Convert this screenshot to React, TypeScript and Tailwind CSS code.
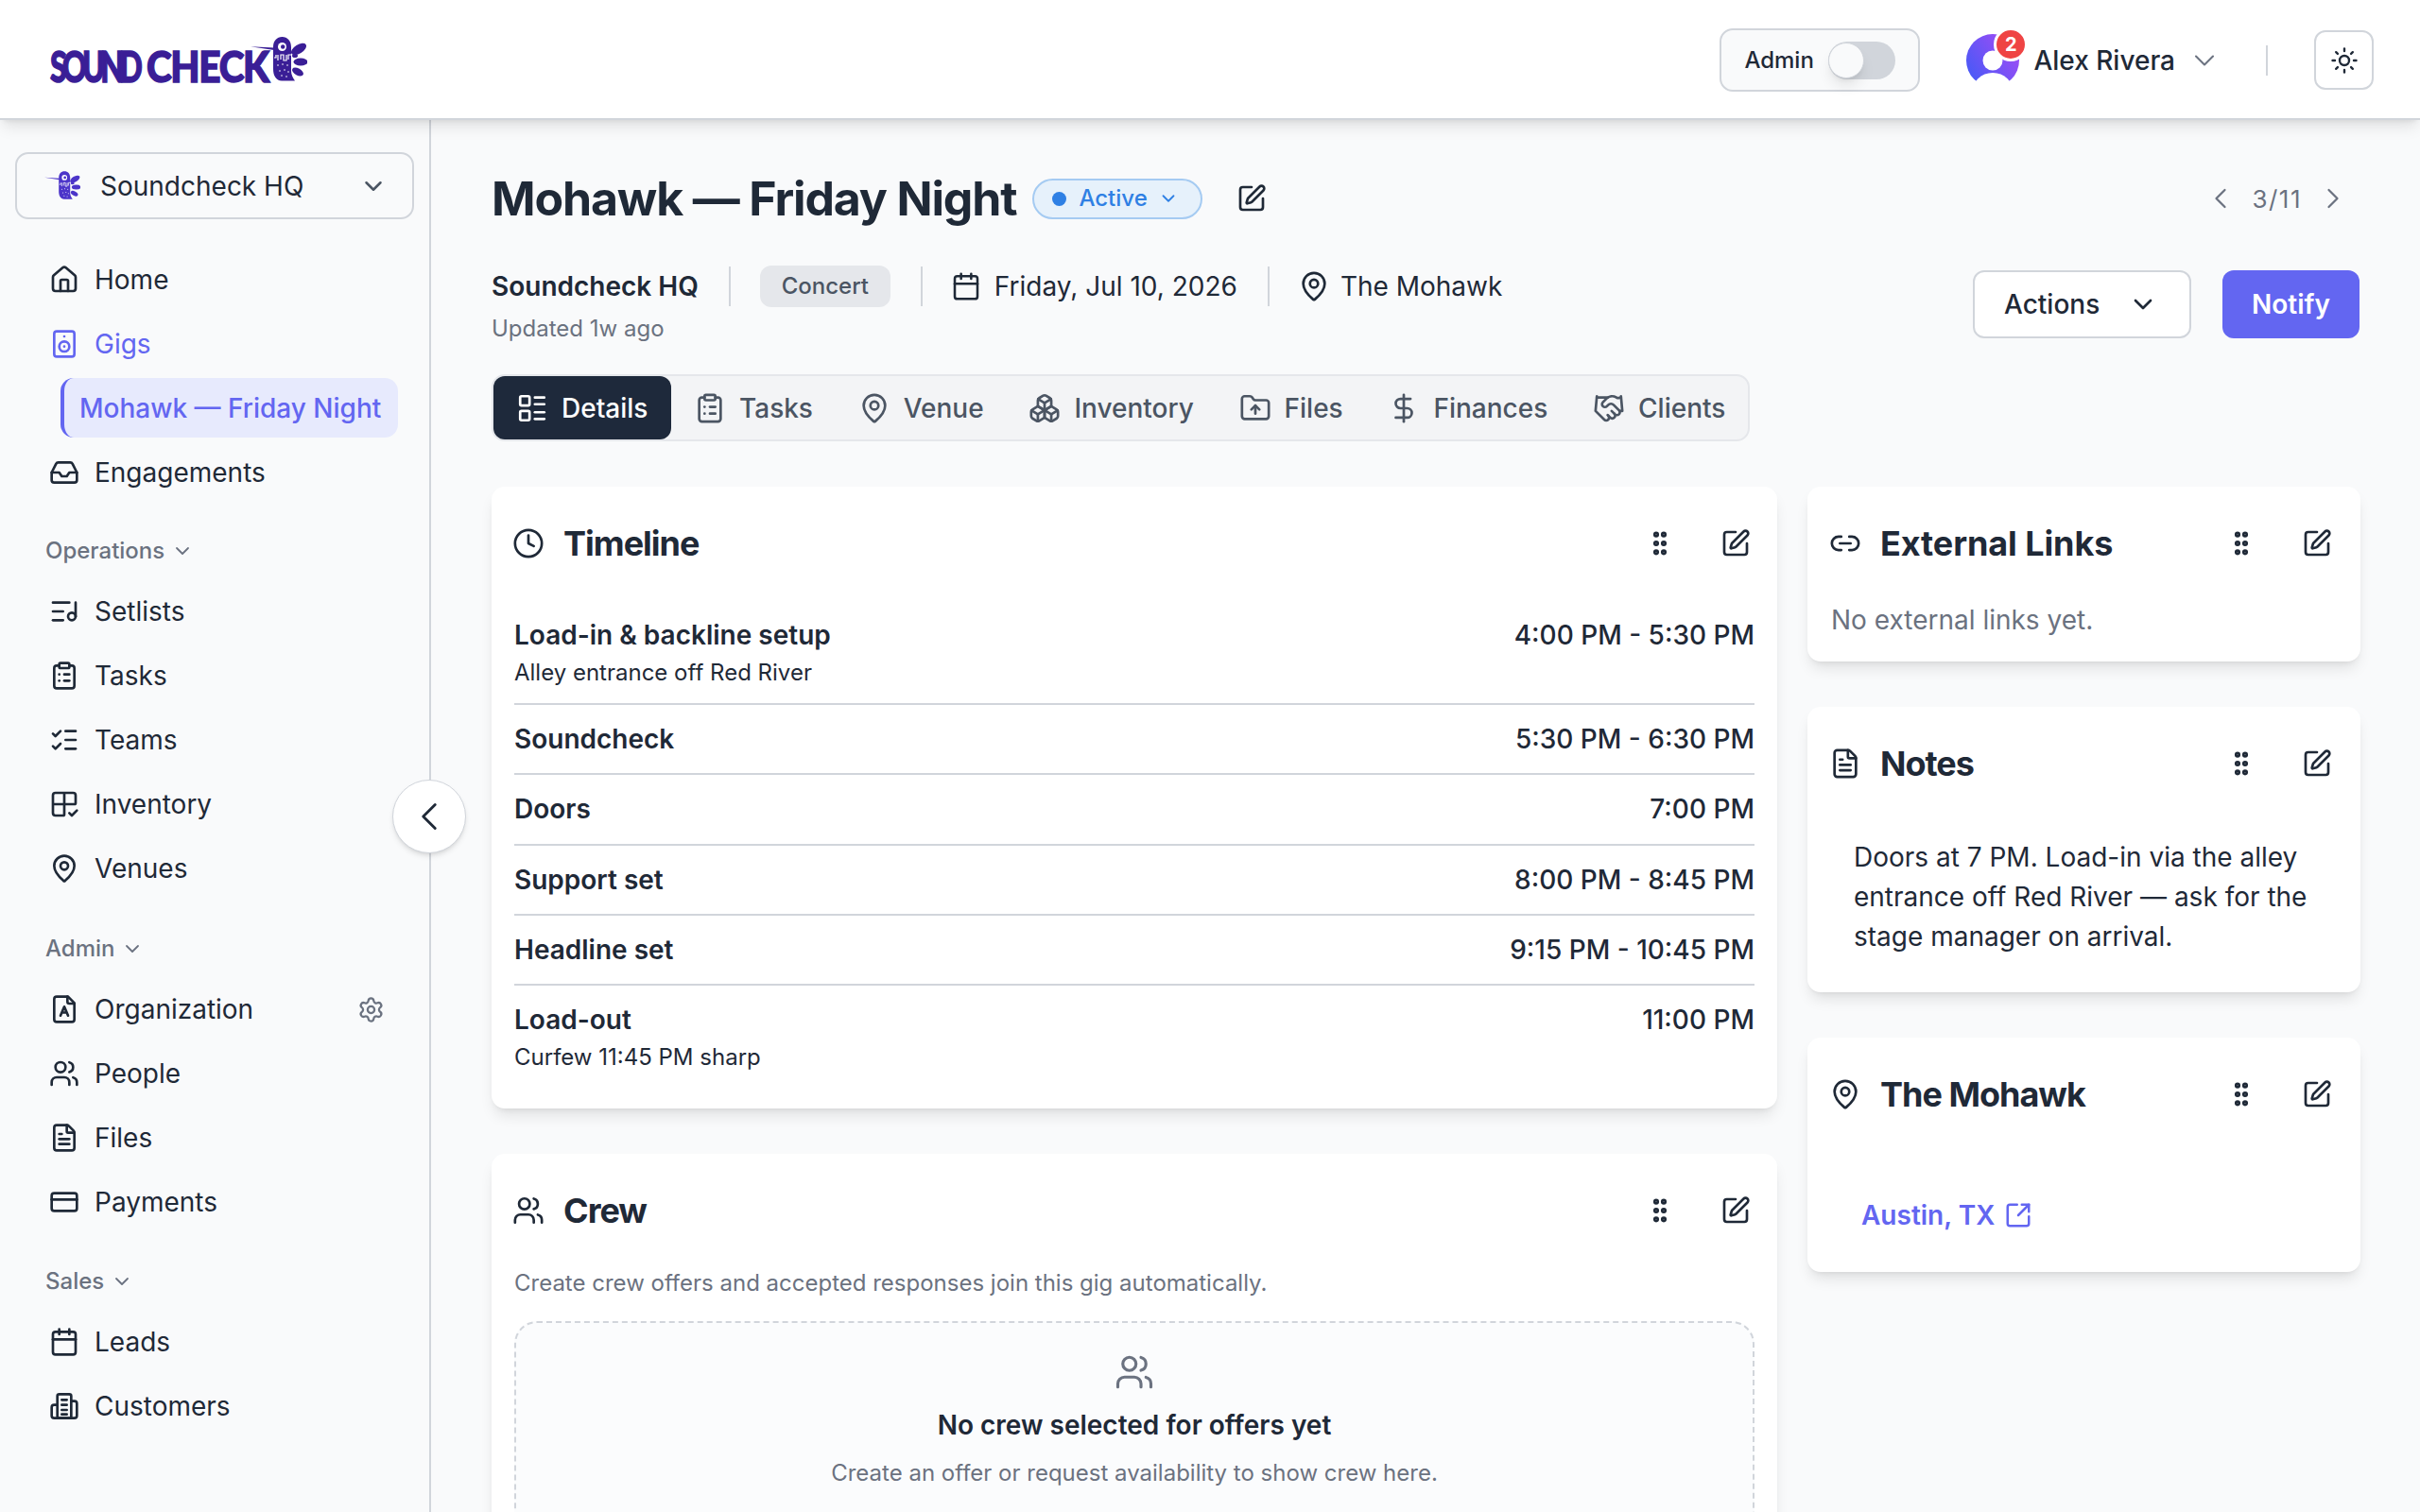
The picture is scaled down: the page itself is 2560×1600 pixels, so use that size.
import React from "react";
import {
  House, Speaker, Inbox, ListMusic, ClipboardList, ListChecks, Grid2x2Check, MapPin, Users, FileText, CreditCard,
  Calendar, Settings, ChevronDown, ChevronLeft, ChevronRight, SquarePen, GripVertical, Clock, Link2, SquareArrowOutUpRight,
  Sun, LayoutList, Boxes, FolderUp, DollarSign, Handshake,
} from "lucide-react";

type IconProps = { className?: string; strokeWidth?: number };

function Bird({ color, className }: { color: string; className?: string }) {
  return (
    <svg viewBox="0 0 60 48" className={className}>
      <path d="M0 10.2 L25 11.6 L25 14 Z" fill={color} />
      <path d="M24 11 C24 4 28 0 33.5 0 C39 0 43 4 43 11 L43 36 C43 40 45 44 47 46.4 L33 46.4 C27 46.4 24 41 24 34 Z" fill={color} />
      <circle cx="33.5" cy="10.5" r="4.5" fill="#fff" />
      <circle cx="34.2" cy="10.5" r="2.2" fill={color} />
      <path d="M25 22 h2 v-3 M29 25 v-6 M32 24 v-5 h3 v6 h3 v-6 M40 24 v-5 h4" fill="none" stroke="#fff" strokeWidth="1.2" />
      <g fill="#fff">
        <circle cx="29" cy="30" r=".8" /><circle cx="34" cy="29" r=".8" /><circle cx="39" cy="30" r=".8" />
        <circle cx="31" cy="36" r=".8" /><circle cx="36" cy="35" r=".8" /><circle cx="40" cy="37" r=".8" />
        <circle cx="33" cy="41" r=".8" /><circle cx="38" cy="42" r=".8" />
      </g>
      <ellipse cx="51" cy="13" rx="9" ry="4.6" transform="rotate(-32 51 13)" fill={color} />
      <ellipse cx="53" cy="26.5" rx="7.5" ry="4" fill={color} />
      <ellipse cx="50" cy="37" rx="6.5" ry="3.6" transform="rotate(28 50 37)" fill={color} />
      <ellipse cx="47" cy="20" rx="3" ry="2" fill={color} />
    </svg>
  );
}

function Logo() {
  return (
    <div className="flex items-end ml-[53px] h-[50px] mt-[2px]">
      <span className="[font-family:Lato,sans-serif] font-black text-[46px] leading-[38px] tracking-[-7px] scale-x-[.7] origin-left text-[#3a1e96] [-webkit-text-stroke:1.5px_#3a1e96] w-[102px] whitespace-nowrap">SOUND</span>
      <span className="[font-family:Lato,sans-serif] font-black text-[46px] leading-[38px] tracking-[-1.5px] scale-x-[.88] origin-left text-[#3a1e96] [-webkit-text-stroke:1.5px_#3a1e96] w-[110px] whitespace-nowrap">CHECK</span>
      <Bird color="#3a1e96" className="w-[60px] h-[48px] mb-[2px]" />
    </div>
  );
}

function OrgIcon({ className, strokeWidth = 2 }: IconProps) {
  return (
    <svg viewBox="0 0 24 24" fill="none" stroke="currentColor" strokeWidth={strokeWidth} strokeLinecap="round" strokeLinejoin="round" className={className}>
      <path d="M15 2H6a2 2 0 0 0-2 2v16a2 2 0 0 0 2 2h12a2 2 0 0 0 2-2V7Z" />
      <path d="M14.5 2v4a1.5 1.5 0 0 0 1.5 1.5h4" />
      <path d="M9 17l3-7 3 7M10 14.6h4" />
    </svg>
  );
}

function CustomersIcon({ className, strokeWidth = 2 }: IconProps) {
  return (
    <svg viewBox="0 0 24 24" fill="none" stroke="currentColor" strokeWidth={strokeWidth} strokeLinecap="round" strokeLinejoin="round" className={className}>
      <rect x="6.5" y="2.5" width="11" height="19" rx="1.5" />
      <path d="M6.5 11H4a2 2 0 0 0-2 2v6.5a2 2 0 0 0 2 2h16a2 2 0 0 0 2-2V10a2 2 0 0 0-2-2h-2.5" />
      <path d="M10 7h4M10 11h4M10 15h4M10 18.5h4" />
    </svg>
  );
}

function NavItem({ icon: Icon, label, right }: { icon: React.ComponentType<IconProps>; label: string; right?: React.ReactNode }) {
  return (
    <div className="flex items-center h-[68px] pl-[52px] pr-[47px] text-[28px] text-[#1f2937]">
      <Icon className="w-[32px] h-[32px] mr-[16px] shrink-0" strokeWidth={2} />
      <span className="flex-1">{label}</span>
      {right}
    </div>
  );
}

function SectionLabel({ label, className }: { label: string; className?: string }) {
  return (
    <div className={`flex items-center gap-[7px] h-[40px] pl-[48px] text-[24px] font-medium text-[#6b7280] ${className ?? ""}`}>
      {label}
      <ChevronDown className="w-[24px] h-[24px]" strokeWidth={1.8} />
    </div>
  );
}

function Sidebar() {
  return (
    <aside className="relative w-[456px] shrink-0 border-r-2 border-[#d1d5db] bg-[#f9fafb]">
      <div className="mx-[16px] mt-[34px] h-[71px] flex items-center rounded-[14px] border-2 border-[#d1d5db] pl-[29px] pr-[15px]">
        <Bird color="#4c35c9" className="w-[38px] h-[31px] mr-[21px]" />
        <span className="flex-1 text-[28px] text-[#1f2937]">Soundcheck HQ</span>
        <ChevronDown className="w-[30px] h-[30px] mr-[11px] text-[#4b5563]" strokeWidth={2} />
      </div>
      <div className="mt-[30px]">
        <NavItem icon={House} label="Home" />
        <div className="flex items-center h-[68px] pl-[52px] text-[28px] text-[#6366f1]">
          <Speaker className="w-[32px] h-[32px] mr-[16px]" strokeWidth={2} />
          Gigs
        </div>
        <div className="mt-[2px] ml-[64px] mr-[33px] h-[63px] flex items-center rounded-[14px] border-l-4 border-[#6366f1] bg-[#e7eafd] pl-[16px] text-[28px] font-medium text-[#6366f1]">
          Mohawk — Friday Night
        </div>
        <div className="mt-[3px]"><NavItem icon={Inbox} label="Engagements" /></div>
      </div>
      <SectionLabel label="Operations" className="mt-[29px]" />
      <div className="mt-[10px]">
        <NavItem icon={ListMusic} label="Setlists" />
        <NavItem icon={ClipboardList} label="Tasks" />
        <NavItem icon={ListChecks} label="Teams" />
        <NavItem icon={Grid2x2Check} label="Inventory" />
        <NavItem icon={MapPin} label="Venues" />
      </div>
      <SectionLabel label="Admin" className="mt-[31px]" />
      <div className="mt-[10px]">
        <NavItem icon={OrgIcon} label="Organization" right={<Settings className="w-[29px] h-[29px] text-[#6b7280]" strokeWidth={1.9} />} />
        <NavItem icon={Users} label="People" />
        <NavItem icon={FileText} label="Files" />
        <NavItem icon={CreditCard} label="Payments" />
      </div>
      <SectionLabel label="Sales" className="mt-[30px]" />
      <div className="mt-[10px]">
        <NavItem icon={Calendar} label="Leads" />
        <NavItem icon={CustomersIcon} label="Customers" />
      </div>
      <button className="absolute left-[415px] top-[698px] w-[78px] h-[78px] rounded-full bg-white border border-[#d1d5db] shadow-md flex items-center justify-center">
        <ChevronLeft className="w-[50px] h-[50px] text-[#1f2937]" strokeWidth={1.4} />
      </button>
    </aside>
  );
}

function Header() {
  return (
    <header className="relative z-10 h-[127px] shrink-0 bg-white border-b-2 border-[#d1d5db] shadow-lg flex items-center justify-between">
      <Logo />
      <div className="flex items-center mr-[49px] pt-[2px]">
        <div className="w-[212px] h-[67px] rounded-[14px] border-2 border-[#d1d5db] bg-[#f9fafb] flex items-center pl-[24px] text-[24px] font-medium text-[#1f2937]">
          Admin
          <span className="ml-[15px] w-[71px] h-[40px] rounded-full bg-[#d1d5db] flex items-center">
            <span className="w-[38px] h-[38px] rounded-full bg-[#f9fafb] border border-[#d1d5db] shadow-lg" />
          </span>
        </div>
        <div className="relative ml-[49px] w-[56px] h-[56px]">
          <svg viewBox="0 0 56 56" className="w-[56px] h-[56px]">
            <defs>
              <linearGradient id="avatarGrad" x1="0" y1="1" x2="1" y2="0.3">
                <stop offset="0" stopColor="#3b5bf7" />
                <stop offset="1" stopColor="#a14cf5" />
              </linearGradient>
            </defs>
            <circle cx="28" cy="28" r="28" fill="url(#avatarGrad)" />
            <circle cx="28" cy="28" r="10.5" fill="#fff" />
            <ellipse cx="28" cy="62" rx="22" ry="21" fill="#fff" />
          </svg>
          <span className="absolute left-[29px] top-[-7px] w-[36px] h-[36px] rounded-full bg-[#ef4444] border-[3px] border-white flex items-center justify-center text-[20px] font-bold text-white">2</span>
        </div>
        <span className="ml-[15px] text-[28px] font-medium text-[#1f2937]">Alex Rivera</span>
        <ChevronDown className="ml-[13px] w-[36px] h-[36px] text-[#6b7280]" strokeWidth={1.4} />
        <span className="ml-[47px] w-[2px] h-[32px] bg-[#d1d5db]" />
        <div className="ml-[49px] w-[63px] h-[63px] rounded-[12px] border-2 border-[#d1d5db] flex items-center justify-center">
          <Sun className="w-[30px] h-[30px] text-[#1f2937]" strokeWidth={1.9} />
        </div>
      </div>
    </header>
  );
}

function Divider() {
  return <span className="w-[2px] h-[42px] bg-[#d1d5db] mx-[32px]" />;
}

function TitleBlock() {
  return (
    <div className="pt-[53px]">
      <div className="flex items-center h-[60px]">
        <h1 className="text-[50px] font-bold tracking-[-1.15px] text-[#1f2937]">Mohawk — Friday Night</h1>
        <div className="ml-[17px] w-[180px] h-[43px] rounded-full border-2 border-[#a5cbf2] bg-[#e6f1fb] flex items-center pl-[19px] text-[24px] font-medium text-[#2f80e4]">
          <span className="w-[15px] h-[15px] rounded-full bg-[#2f80e4] mr-[13px]" />
          Active
          <ChevronDown className="ml-[11px] w-[22px] h-[22px]" strokeWidth={2} />
        </div>
        <SquarePen className="ml-[36px] w-[32px] h-[32px] text-[#1f2937]" strokeWidth={2} />
        <div className="ml-auto flex items-center text-[26px] tracking-[1.5px] text-[#6b7280] mr-[11px]">
          <ChevronLeft className="w-[36px] h-[36px]" strokeWidth={1.5} />
          <span className="mx-[15px]">3/11</span>
          <ChevronRight className="w-[36px] h-[36px]" strokeWidth={1.5} />
        </div>
      </div>
      <div className="flex items-start justify-between mt-[41px]">
        <div>
          <div className="flex items-center h-[44px] text-[28px] text-[#1f2937]">
            <span className="font-semibold">Soundcheck HQ</span>
            <Divider />
            <span className="w-[138px] -ml-[1px] h-[44px] rounded-[12px] bg-[#e5e7eb] text-[24px] font-medium text-[#4b5563] flex items-center justify-center">Concert</span>
            <Divider />
            <Calendar className="w-[32px] h-[32px] mr-[14px] -ml-[2px]" strokeWidth={1.9} />
            Friday, Jul 10, 2026
            <Divider />
            <MapPin className="w-[34px] h-[34px] mr-[11px] -ml-[2px]" strokeWidth={1.9} />
            The Mohawk
          </div>
          <div className="mt-[5px] text-[24px] leading-[36px] text-[#6b7280]">Updated 1w ago</div>
        </div>
        <div className="flex gap-[33px] mt-[5px] mr-[1px]">
          <button className="w-[231px] h-[72px] rounded-[12px] bg-white border-2 border-[#d1d5db] flex items-center pl-[31px] gap-[30px] text-[28px] font-medium text-[#1f2937]">
            Actions
            <ChevronDown className="w-[32px] h-[32px]" strokeWidth={2} />
          </button>
          <button className="w-[145px] h-[72px] rounded-[12px] bg-[#6366f1] text-[28px] font-semibold text-white">Notify</button>
        </div>
      </div>
    </div>
  );
}

const tabs: { icon: React.ComponentType<IconProps>; label: string }[] = [
  { icon: ClipboardList, label: "Tasks" },
  { icon: MapPin, label: "Venue" },
  { icon: Boxes, label: "Inventory" },
  { icon: FolderUp, label: "Files" },
  { icon: DollarSign, label: "Finances" },
  { icon: Handshake, label: "Clients" },
];

function Tabs() {
  return (
    <div className="mt-[30px] w-[1331px] h-[71px] rounded-[14px] border-2 border-[#e5e7eb] bg-[#f3f4f6] flex items-center">
      <div className="w-[188px] h-[67px] rounded-[12px] bg-[#1e293b] flex items-center pl-[24px] gap-[14px] text-[28px] font-medium text-white">
        <LayoutList className="w-[34px] h-[34px]" strokeWidth={1.9} />
        Details
      </div>
      <div className="flex items-center ml-[24px] gap-[47.75px]">
        {tabs.map((t) => (
          <div key={t.label} className="flex items-center gap-[14px] text-[28px] font-medium text-[#4b5563]">
            <t.icon className="w-[34px] h-[34px]" strokeWidth={1.9} />
            {t.label}
          </div>
        ))}
      </div>
    </div>
  );
}

function GripDots() {
  return <GripVertical className="w-[32px] h-[32px] text-[#1f2937]" strokeWidth={2.6} />;
}

function CardHeader({ icon: Icon, title, narrow, titleClass }: { icon: React.ComponentType<IconProps>; title: string; narrow?: boolean; titleClass?: string }) {
  return (
    <div className={`flex items-center h-[46px] ${narrow ? "pl-[23px] pr-[30px]" : "pl-[22px] pr-[28px]"}`}>
      <Icon className="w-[34px] h-[34px] text-[#1f2937] mr-[20px]" strokeWidth={1.9} />
      <span className={`flex-1 text-[36px] font-bold text-[#1f2937] ${titleClass ?? "tracking-[-1px]"}`}>{title}</span>
      <GripDots />
      <SquarePen className="ml-[48px] w-[32px] h-[32px] text-[#1f2937]" strokeWidth={2} />
    </div>
  );
}

const rows = [
  { t: "Load-in & backline setup", s: "Alley entrance off Red River", r: "4:00 PM - 5:30 PM" },
  { t: "Soundcheck", r: "5:30 PM - 6:30 PM" },
  { t: "Doors", r: "7:00 PM" },
  { t: "Support set", r: "8:00 PM - 8:45 PM" },
  { t: "Headline set", r: "9:15 PM - 10:45 PM" },
  { t: "Load-out", s: "Curfew 11:45 PM sharp", r: "11:00 PM" },
];

function Timeline() {
  return (
    <section className="h-[658px] rounded-[14px] bg-white shadow-lg pt-[37px]">
      <CardHeader icon={Clock} title="Timeline" />
      <div className="mx-[24px] mt-[56px]">
        {rows.map((r, i) => (
          <div key={r.t} className={`flex justify-between ${i < rows.length - 1 ? "border-b-2 border-[#d1d5db]" : ""} ${i === 0 ? "pb-[13px]" : "pt-[18px]"} ${i > 0 && i < 5 ? "pb-[18.25px]" : ""}`}>
            <div>
              <div className="text-[28px] leading-[36px] font-semibold text-[#1f2937]">{r.t}</div>
              {r.s && <div className="mt-[3px] text-[24px] leading-[38px] text-[#1f2937]">{r.s}</div>}
            </div>
            <div className="text-[28px] leading-[36px] font-medium text-[#1f2937]">{r.r}</div>
          </div>
        ))}
      </div>
    </section>
  );
}

function Crew() {
  return (
    <section className="mt-[48px] h-[500px] rounded-[14px] bg-white shadow-lg pt-[37px]">
      <CardHeader icon={Users} title="Crew" />
      <p className="mt-[35px] ml-[24px] text-[24px] leading-[38px] text-[#6b7280]">Create crew offers and accepted responses join this gig automatically.</p>
      <div className="mx-[24px] mt-[21px] h-[300px] rounded-[24px] border-2 border-dashed border-[#d1d5db] bg-[#fbfcfd] flex flex-col items-center pt-[31px]">
        <Users className="w-[42px] h-[42px] text-[#6b7280]" strokeWidth={1.8} />
        <div className="mt-[15px] text-[28px] leading-[40px] font-semibold text-[#1f2937]">No crew selected for offers yet</div>
        <div className="mt-[12px] text-[24px] leading-[38px] text-[#6b7280]">Create an offer or request availability to show crew here.</div>
      </div>
    </section>
  );
}

function RightColumn() {
  return (
    <div className="flex flex-col gap-[48px]">
      <section className="h-[185px] rounded-[14px] bg-white shadow-lg pt-[37px]">
        <CardHeader icon={Link2} title="External Links" narrow titleClass="tracking-[-0.1px]" />
        <p className="mt-[38px] ml-[25px] text-[28px] leading-[40px] text-[#6b7280]">No external links yet.</p>
      </section>
      <section className="h-[302px] rounded-[14px] bg-white shadow-lg pt-[37px]">
        <CardHeader icon={FileText} title="Notes" narrow />
        <p className="mt-[55px] mx-[49px] text-[28px] leading-[42px] text-[#1f2937]">Doors at 7 PM. Load-in via the alley entrance off Red River — ask for the stage manager on arrival.</p>
      </section>
      <section className="h-[248px] rounded-[14px] bg-white shadow-lg pt-[37px]">
        <CardHeader icon={MapPin} title="The Mohawk" narrow />
        <div className="mt-[85px] ml-[57px] flex items-center gap-[10px] text-[28px] leading-[40px] font-semibold text-[#6366f1]">
          Austin, TX
          <SquareArrowOutUpRight className="w-[30px] h-[30px]" strokeWidth={2} />
        </div>
      </section>
    </div>
  );
}

export default function App() {
  return (
    <div className="h-[1600px] w-[2560px] overflow-hidden flex flex-col bg-[#f9fafb] [font-family:Inter,sans-serif]">
      <Header />
      <div className="flex flex-1 min-h-0">
        <Sidebar />
        <main className="flex-1 pl-[64px] pr-[63px]">
          <TitleBlock />
          <Tabs />
          <div className="mt-[48px] grid grid-cols-[1360px_585px] gap-x-[32px] items-start">
            <div><Timeline /><Crew /></div>
            <RightColumn />
          </div>
        </main>
      </div>
    </div>
  );
}
